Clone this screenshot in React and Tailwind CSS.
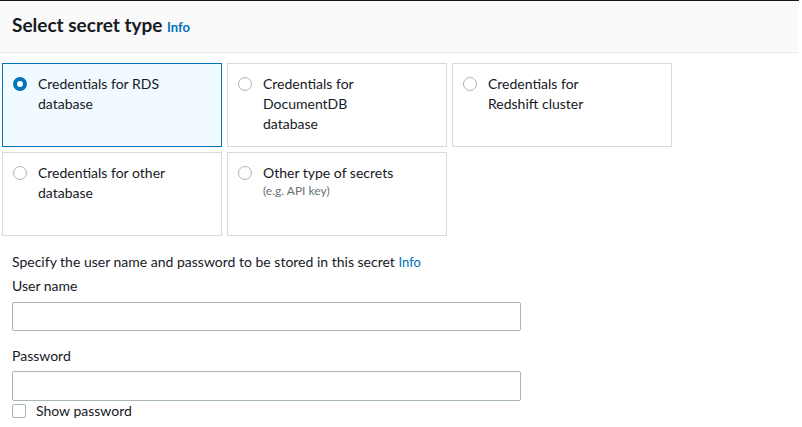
import React from "react";

const cards = [
  { lines: ["Credentials for RDS", "database"], selected: true },
  { lines: ["Credentials for", "DocumentDB", "database"] },
  { lines: ["Credentials for", "Redshift cluster"] },
  { lines: ["Credentials for other", "database"] },
  { lines: ["Other type of secrets"], sub: "(e.g. API key)" },
];

function Radio({ selected }) {
  return selected ? (
    <span className="mt-[3px] box-border h-[14px] w-[14px] shrink-0 rounded-full border-[4px] border-[#0073bb] bg-white" />
  ) : (
    <span className="mt-[3px] box-border h-[14px] w-[14px] shrink-0 rounded-full border border-[#aab7b8] bg-white" />
  );
}

export default function App() {
  return (
    <div
      className="h-[427px] w-[802px] overflow-hidden bg-white text-[#16191f]"
      style={{ fontFamily: 'Lato, "Liberation Sans", sans-serif' }}
    >
      <div className="mr-[3px] flex h-[53px] items-center border-t border-b border-t-[#16191f] border-b-[#eaeded] bg-[#fafafa] px-3 pb-[2px]">
        <h2 className="text-[19px] font-bold leading-6">
          Select secret type{" "}
          <span className="text-[13px] font-bold text-[#0073bb]">Info</span>
        </h2>
      </div>

      <div className="ml-[2px] mt-[10px] grid w-[670px] grid-cols-3 gap-[5px]">
        {cards.map((c) => (
          <div
            key={c.lines.join(" ")}
            className={
              "flex h-[84px] gap-[11px] border pl-[10px] pr-[10px] pt-[10px] " +
              (c.selected
                ? "border-[#0073bb] bg-[#f1faff]"
                : "border-[#d5dbdb] bg-white")
            }
          >
            <Radio selected={c.selected} />
            <div>
              <div className="text-[14px] leading-5">
                {c.lines.map((l, i) => (
                  <div key={i}>{l}</div>
                ))}
              </div>
              {c.sub && (
                <div className="text-[12px] leading-4 text-[#687078]">{c.sub}</div>
              )}
            </div>
          </div>
        ))}
      </div>

      <div className="px-3 pt-[16px]">
        <p className="text-[14px] leading-5">
          Specify the user name and password to be stored in this secret{" "}
          <span className="text-[13px] text-[#0073bb]">Info</span>
        </p>
        <label className="mt-[4px] block text-[14px] leading-5">User name</label>
        <input
          type="text"
          className="mt-[6px] block h-[29px] w-[509px] rounded-[2px] border border-[#aab7b8] bg-white"
        />
        <label className="mt-[15px] block text-[14px] leading-5">Password</label>
        <input
          type="password"
          className="mt-[5px] block h-[30px] w-[509px] rounded-[2px] border border-[#aab7b8] bg-white"
        />
        <label className="flex items-center gap-[10px] text-[14px] leading-5">
          <span className="h-[14px] w-[14px] rounded-[2px] border border-[#aab7b8] bg-white" />
          Show password
        </label>
      </div>
    </div>
  );
}
